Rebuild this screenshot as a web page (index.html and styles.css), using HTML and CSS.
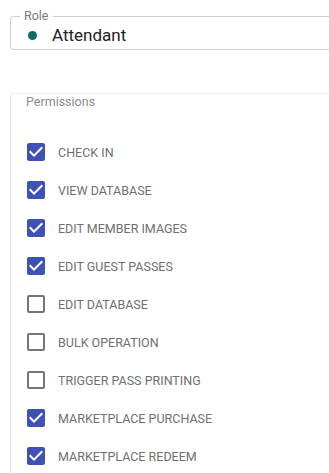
FILE: index.html
```html
<!DOCTYPE html>
<html>
<head>
<meta charset="utf-8">
<link rel="stylesheet" href="styles.css">
</head>
<body>
<fieldset class="role-field">
  <legend class="role-label">Role</legend>
  <div class="role-value"><span class="dot"></span><span class="role-text">Attendant</span></div>
</fieldset>

<section class="card">
  <div class="card-title">Permissions</div>
  <ul class="perm-list">
    <li class="perm"><svg class="cb checked" viewBox="0 0 24 24"><path d="M19 3H5c-1.11 0-2 .9-2 2v14c0 1.1.89 2 2 2h14c1.11 0 2-.9 2-2V5c0-1.1-.89-2-2-2zm-9 14l-5-5 1.41-1.41L10 14.170l7.59-7.59L19 8l-9 9z"/></svg><span>CHECK IN</span></li>
    <li class="perm"><svg class="cb checked" viewBox="0 0 24 24"><path d="M19 3H5c-1.11 0-2 .9-2 2v14c0 1.1.89 2 2 2h14c1.11 0 2-.9 2-2V5c0-1.1-.89-2-2-2zm-9 14l-5-5 1.41-1.41L10 14.17l7.59-7.59L19 8l-9 9z"/></svg><span>VIEW DATABASE</span></li>
    <li class="perm"><svg class="cb checked" viewBox="0 0 24 24"><path d="M19 3H5c-1.11 0-2 .9-2 2v14c0 1.1.89 2 2 2h14c1.11 0 2-.9 2-2V5c0-1.1-.89-2-2-2zm-9 14l-5-5 1.41-1.41L10 14.17l7.59-7.59L19 8l-9 9z"/></svg><span>EDIT MEMBER IMAGES</span></li>
    <li class="perm"><svg class="cb checked" viewBox="0 0 24 24"><path d="M19 3H5c-1.11 0-2 .9-2 2v14c0 1.1.89 2 2 2h14c1.11 0 2-.9 2-2V5c0-1.1-.89-2-2-2zm-9 14l-5-5 1.41-1.41L10 14.17l7.59-7.59L19 8l-9 9z"/></svg><span>EDIT GUEST PASSES</span></li>
    <li class="perm"><svg class="cb" viewBox="0 0 24 24"><path d="M19 5v14H5V5h14m0-2H5c-1.1 0-2 .9-2 2v14c0 1.1.9 2 2 2h14c1.1 0 2-.9 2-2V5c0-1.1-.9-2-2-2z"/></svg><span>EDIT DATABASE</span></li>
    <li class="perm"><svg class="cb" viewBox="0 0 24 24"><path d="M19 5v14H5V5h14m0-2H5c-1.1 0-2 .9-2 2v14c0 1.1.9 2 2 2h14c1.1 0 2-.9 2-2V5c0-1.1-.9-2-2-2z"/></svg><span>BULK OPERATION</span></li>
    <li class="perm"><svg class="cb" viewBox="0 0 24 24"><path d="M19 5v14H5V5h14m0-2H5c-1.1 0-2 .9-2 2v14c0 1.1.9 2 2 2h14c1.1 0 2-.9 2-2V5c0-1.1-.9-2-2-2z"/></svg><span>TRIGGER PASS PRINTING</span></li>
    <li class="perm"><svg class="cb checked" viewBox="0 0 24 24"><path d="M19 3H5c-1.11 0-2 .9-2 2v14c0 1.1.89 2 2 2h14c1.11 0 2-.9 2-2V5c0-1.1-.89-2-2-2zm-9 14l-5-5 1.41-1.41L10 14.17l7.59-7.59L19 8l-9 9z"/></svg><span>MARKETPLACE PURCHASE</span></li>
    <li class="perm"><svg class="cb checked" viewBox="0 0 24 24"><path d="M19 3H5c-1.11 0-2 .9-2 2v14c0 1.1.89 2 2 2h14c1.11 0 2-.9 2-2V5c0-1.1-.89-2-2-2zm-9 14l-5-5 1.41-1.41L10 14.17l7.59-7.59L19 8l-9 9z"/></svg><span>MARKETPLACE REDEEM</span></li>
  </ul>
</section>
</body>
</html>
```

FILE: styles.css
```css
html, body {
  margin: 0;
  padding: 0;
  background: #ffffff;
  overflow: hidden;
}
body {
  font-family: Roboto, "Noto Sans", Arial, sans-serif;
  width: 329px;
  height: 473px;
}
.role-field {
  margin: 10px 0 0 10px;
  padding: 0 0 0 9px;
  border: 1px solid #cfcfcf;
  border-right: none;
  border-radius: 4px 0 0 4px;
  height: 40px;
  box-sizing: border-box;
  min-width: 0;
}
.role-label {
  padding: 0 4px;
  font-size: 12.5px;
  line-height: 12px;
  color: #7a7a7a;
}
.role-value {
  display: flex;
  align-items: center;
  height: 28px;
  margin-top: -1px;
}
.dot {
  width: 9px;
  height: 9px;
  border-radius: 50%;
  background: #0e6b62;
  margin-left: 8px;
}
.role-text {
  margin-left: 15px;
  font-size: 17px;
  color: #222;
}
.card {
  margin: 43px 0 0 10px;
  border-top: 1px solid #f0f0f0;
  border-left: 1px solid #ececec;
  border-radius: 4px 0 0 0;
  box-shadow: 0 0 2px rgba(0,0,0,0.05);
  padding: 0 0 0 13px;
  height: 400px;
}
.card-title {
  padding-left: 2px;
  font-size: 12.5px;
  line-height: 16px;
  color: #8a8a8a;
}
.perm-list {
  list-style: none;
  margin: 23px 0 0 0;
  padding: 0;
}
.perm {
  display: flex;
  align-items: center;
  height: 38px;
}
.cb {
  width: 24px;
  height: 24px;
  fill: #757575;
  flex: none;
}
.cb.checked {
  fill: #3f51b5;
}
.perm span {
  margin-left: 10px;
  font-size: 12.5px;
  color: #6f6f6f;
}
```
